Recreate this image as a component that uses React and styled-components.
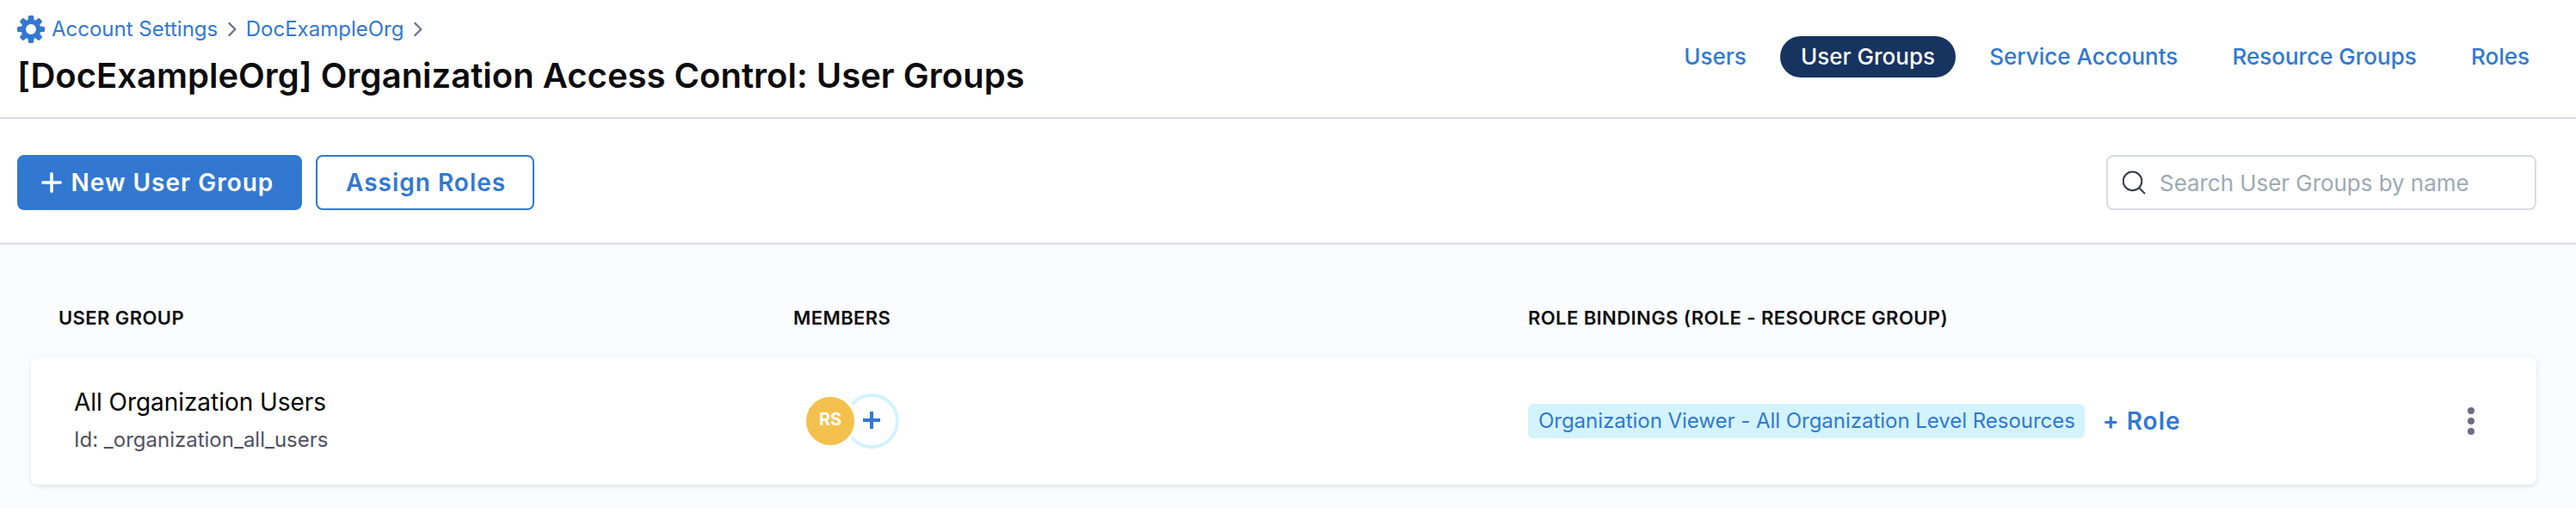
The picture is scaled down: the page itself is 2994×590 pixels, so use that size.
import React from "react";
import styled, { createGlobalStyle } from "styled-components";

const GlobalStyle = createGlobalStyle`
  * { box-sizing: border-box; }
  body { margin: 0; background: #fafcff; font-family: Inter, "Liberation Sans", sans-serif; color: #0b0b0d; }
  button, input { font-family: inherit; }
`;

const Page = styled.div`
  min-height: 590px;
  display: flex;
  flex-direction: column;
  background: #fafcff;
`;

const Header = styled.header`
  display: flex;
  justify-content: space-between;
  align-items: flex-start;
  height: 138px;
  padding: 18px 30px 0 20px;
  background: #fff;
  border-bottom: 2px solid #d9dae6;
`;

const Breadcrumbs = styled.nav`
  display: flex;
  align-items: center;
  height: 32px;
`;

const Crumb = styled.a`
  font-size: 24px;
  line-height: 32px;
  color: #3278d0;
`;

const GearIcon = styled.svg`
  width: 32px;
  height: 32px;
  margin-right: 8px;
  color: #3278d0;
`;

const ChevronIcon = styled.svg`
  width: 10px;
  height: 18px;
  margin: 0 11px 0 11.5px;
  color: #6b6d85;
`;

const Title = styled.h1`
  margin: 14px 0 0;
  font-size: 40px;
  font-weight: 600;
  letter-spacing: 0.01px;
  line-height: 48px;
  white-space: nowrap;
`;

const Tabs = styled.nav`
  display: flex;
  gap: 15.2px;
  margin-top: 24px;
`;

const Tab = styled.a`
  height: 48px;
  padding: 0 24px;
  border-radius: 24px;
  font-size: 26px;
  font-weight: 500;
  line-height: 48px;
  white-space: nowrap;
  color: ${(p) => (p.$active ? "#fff" : "#3278d0")};
  background: ${(p) => (p.$active ? "#17335f" : "transparent")};
`;

const Toolbar = styled.section`
  display: flex;
  align-items: flex-start;
  gap: 16px;
  height: 146px;
  padding: 42px 46px 0 20px;
  background: #fff;
  border-bottom: 2px solid #d9dae6;
`;

const Button = styled.button`
  display: flex;
  align-items: center;
  justify-content: flex-start;
  gap: 10.5px;
  width: ${(p) => p.$width}px;
  height: 64px;
  padding: 0 0 0 ${(p) => (p.$primary ? 26 : 33)}px;
  border: 2px solid #3278d0;
  border-radius: 8px;
  font-size: 28px;
  font-weight: 600;
  letter-spacing: 1px;
  line-height: 40px;
  white-space: nowrap;
  color: ${(p) => (p.$primary ? "#fff" : "#3278d0")};
  background: ${(p) => (p.$primary ? "#3278d0" : "#fff")};
`;

const PlusIcon = styled.svg`
  width: 24px;
  height: 24px;
`;

const SearchBox = styled.label`
  display: flex;
  align-items: center;
  width: 500px;
  height: 64px;
  margin-left: auto;
  padding: 0 17px;
  border: 2px solid #d9dae6;
  border-radius: 8px;
`;

const SearchIcon = styled.svg`
  flex: none;
  width: 28px;
  height: 28px;
  margin-right: 15px;
`;

const SearchInput = styled.input`
  flex: 1;
  min-width: 0;
  height: 40px;
  padding: 0;
  border: 0;
  outline: 0;
  background: transparent;
  font-size: 26px;
  letter-spacing: -0.05px;
  &::placeholder { color: #9da9b3; opacity: 1; }
`;

const Table = styled.main`
  padding: 69px 46px 0 36px;
`;

const HeadRow = styled.div`
  display: grid;
  grid-template-columns: 854px 854px 1fr;
  height: 62px;
  padding-left: 32px;
`;

const HeadCell = styled.div`
  font-size: 22px;
  font-weight: 600;
  letter-spacing: 0.42px;
  line-height: 32px;
  white-space: nowrap;
`;

const GroupCard = styled.article`
  display: grid;
  grid-template-columns: 854px 854px 1fr 24px;
  align-items: center;
  height: 148px;
  padding: 0 64px 0 32px;
  border-radius: 8px;
  background: #fff;
  box-shadow: 0 0 14px rgba(40, 41, 61, 0.04), 0 2px 4px rgba(96, 97, 112, 0.14);
`;

const GroupInfo = styled.div`
  padding: 0 0 2px 18px;
`;

const GroupName = styled.div`
  font-size: 28px;
  letter-spacing: -0.05px;
  line-height: 44px;
  color: #000;
`;

const GroupId = styled.div`
  font-size: 24px;
  line-height: 43px;
  color: #4f5162;
`;

const Members = styled.div`
  display: flex;
  align-items: center;
  padding-left: 11px;
`;

const Avatar = styled.div`
  position: relative;
  z-index: 1;
  width: 64px;
  height: 64px;
  border: 4px solid #fff;
  border-radius: 50%;
  background: #f4c04d;
  color: #fff;
  font-size: 20px;
  font-weight: 700;
  line-height: 52px;
  text-align: center;
`;

const AddMember = styled.button`
  display: flex;
  align-items: center;
  justify-content: center;
  width: 64px;
  height: 64px;
  margin-left: -16px;
  padding: 0 0 2px;
  border: 4px solid #d3f3fe;
  border-radius: 50%;
  background: #fff;
  color: #3278d0;
`;

const Bindings = styled.div`
  display: flex;
  align-items: center;
  gap: 21px;
`;

const RoleTag = styled.span`
  height: 40px;
  padding: 0 11px 0 12px;
  border-radius: 6px;
  background: #d3f3fe;
  color: #3278d0;
  font-size: 24px;
  letter-spacing: -0.03px;
  line-height: 39px;
  white-space: nowrap;
`;

const AddRole = styled.button`
  padding: 0;
  border: 0;
  background: none;
  color: #3278d0;
  font-size: 28px;
  font-weight: 600;
  letter-spacing: 1px;
  line-height: 40px;
`;

const MoreIcon = styled.svg`
  width: 24px;
  height: 40px;
  color: #6b6d85;
`;

const Gear = () => (
  <GearIcon viewBox="0 0 32 32" fill="currentColor">
    <path
      fillRule="evenodd"
      d="M16 4.6a11.4 11.4 0 1 0 0 22.8 11.4 11.4 0 0 0 0-22.8Zm0 5.4a6 6 0 1 1 0 12 6 6 0 0 1 0-12Z"
    />
    {[0, 45, 90, 135, 180, 225, 270, 315].map((a) => (
      <path key={a} transform={`rotate(${a} 16 16)`} d="M14.2 0h3.6a1.3 1.3 0 0 1 1.3 1.2L19.6 6h-7.2l.5-4.8A1.3 1.3 0 0 1 14.2 0Z" />
    ))}
  </GearIcon>
);

const Chevron = () => (
  <ChevronIcon viewBox="0 0 10 18" fill="none" stroke="currentColor" strokeWidth="2.2" strokeLinecap="round" strokeLinejoin="round">
    <path d="M1.4 2 8.4 9l-7 7" />
  </ChevronIcon>
);

const tabs = ["Users", "User Groups", "Service Accounts", "Resource Groups", "Roles"];

export default function App() {
  return (
    <Page>
      <GlobalStyle />
      <Header>
        <div>
          <Breadcrumbs>
            <Gear />
            <Crumb>Account Settings</Crumb>
            <Chevron />
            <Crumb>DocExampleOrg</Crumb>
            <Chevron />
          </Breadcrumbs>
          <Title>[DocExampleOrg] Organization Access Control: User Groups</Title>
        </div>
        <Tabs>
          {tabs.map((name) => (
            <Tab key={name} $active={name === "User Groups"}>{name}</Tab>
          ))}
        </Tabs>
      </Header>
      <Toolbar>
        <Button $primary $width={331}>
          <PlusIcon viewBox="0 0 24 24" fill="none" stroke="currentColor" strokeWidth="3.6" strokeLinecap="round">
            <path d="M12 1.8v20.4M1.8 12h20.4" />
          </PlusIcon>
          New User Group
        </Button>
        <Button $width={254}>Assign Roles</Button>
        <SearchBox>
          <SearchIcon viewBox="0 0 28 28" fill="none" stroke="#383946" strokeWidth="2">
            <circle cx="11.5" cy="12.4" r="10.8" />
            <path d="m19 20 7 7" />
          </SearchIcon>
          <SearchInput placeholder="Search User Groups by name" />
        </SearchBox>
      </Toolbar>
      <Table>
        <HeadRow>
          <HeadCell>USER GROUP</HeadCell>
          <HeadCell>MEMBERS</HeadCell>
          <HeadCell>ROLE BINDINGS (ROLE - RESOURCE GROUP)</HeadCell>
        </HeadRow>
        <GroupCard>
          <GroupInfo>
            <GroupName>All Organization Users</GroupName>
            <GroupId>Id: _organization_all_users</GroupId>
          </GroupInfo>
          <Members>
            <Avatar>RS</Avatar>
            <AddMember aria-label="Add member">
              <svg width="20" height="20" viewBox="0 0 20 20" stroke="currentColor" strokeWidth="4">
                <path d="M10 0v20M0 10h20" />
              </svg>
            </AddMember>
          </Members>
          <Bindings>
            <RoleTag>Organization Viewer - All Organization Level Resources</RoleTag>
            <AddRole>+ Role</AddRole>
          </Bindings>
          <MoreIcon viewBox="0 0 24 40" fill="currentColor">
            <circle cx="12" cy="8" r="4" />
            <circle cx="12" cy="20" r="4" />
            <circle cx="12" cy="32" r="4" />
          </MoreIcon>
        </GroupCard>
      </Table>
    </Page>
  );
}
